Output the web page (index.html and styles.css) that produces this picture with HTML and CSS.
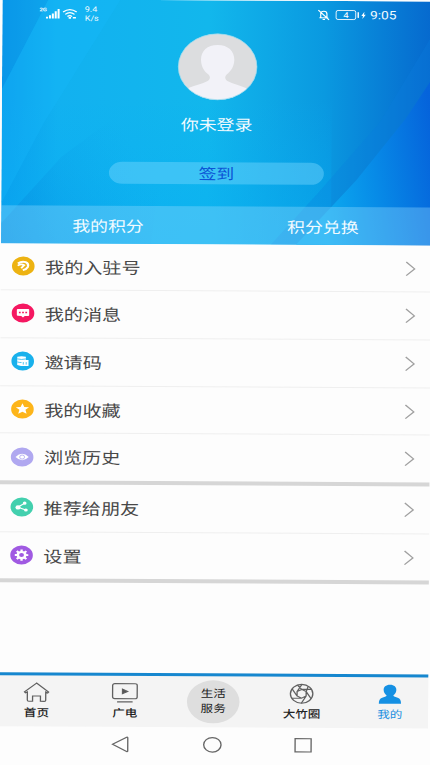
FILE: index.html
```html
<!DOCTYPE html>
<html lang="zh-CN">
<head>
<meta charset="utf-8">
<title>我的</title>
<link rel="stylesheet" href="styles.css">
</head>
<body>
<div class="screen">
  <header class="hero">
    <svg class="hero-bg" viewBox="0 0 430 245" preserveAspectRatio="none">
      <defs>
        <linearGradient id="sky" x1="0" y1="0" x2="1" y2="0">
          <stop offset="0" stop-color="#0b9ceb"/>
          <stop offset="0.13" stop-color="#12b1f0"/>
          <stop offset="0.48" stop-color="#12b7ec"/>
          <stop offset="0.75" stop-color="#0a99e0"/>
          <stop offset="1" stop-color="#0669ce"/>
        </linearGradient>
        <linearGradient id="beam" gradientUnits="userSpaceOnUse" x1="320" y1="200" x2="440" y2="180">
          <stop offset="0" stop-color="#0caef2"/>
          <stop offset="0.45" stop-color="#078de9"/>
          <stop offset="1" stop-color="#0562dc"/>
        </linearGradient>
        <linearGradient id="fade" gradientUnits="userSpaceOnUse" x1="0" y1="245" x2="140" y2="160">
          <stop offset="0" stop-color="#0480d8" stop-opacity="0.45"/>
          <stop offset="1" stop-color="#0ba4ea" stop-opacity="0"/>
        </linearGradient>
        <linearGradient id="low" x1="0" y1="0" x2="0" y2="1">
          <stop offset="0.4" stop-color="#05aef5" stop-opacity="0"/>
          <stop offset="1" stop-color="#05aef5" stop-opacity="0.5"/>
        </linearGradient>
      </defs>
      <rect width="430" height="245" fill="url(#sky)"/>
      <rect width="330" height="245" fill="url(#low)"/>
      <path d="M0 0H46L0 90Z" fill="#0784e0" opacity="0.2"/>
      <path d="M46 0H118L42 124L0 205V90Z" fill="#18b8fb" opacity="0.3"/>
      <path d="M0 225L60 158L170 75L150 245H0Z" fill="url(#fade)"/>
      <path d="M430 34L378 122L315 195L270 245H430Z" fill="#0a7fdf" opacity="0.28"/>
      <path d="M430 78L404 118L355 180L295 245H430Z" fill="url(#beam)" opacity="0.9"/>
    </svg>
    <div class="status">
      <svg class="signal" viewBox="0 0 32 12">
        <text x="0" y="3.9" class="net">2G</text>
        <path d="M5.5 9.2h1.7V11H5.5zM8 7.8h1.7V11H8zM10.4 6h1.7v5h-1.700zM12.8 3.8h1.7V11h-1.700zM15.2 1.400h1.700V11h-1.700z" fill="#fff"/>
        <path d="M19.8 4.400Q25.500-.4 31.200 4.400M21.600 6.800Q25.500 3.400 29.400 6.800M23.500 9Q25.500 7.200 27.300 9" fill="none" stroke="#fff" stroke-width="1.200"/>
        <path d="M24.500 9.500h2v1.600h-2zM28 9.500h2.600v1.400H28z" fill="#fff"/>
      </svg>
      <div class="speed">9.4<br>K/s</div>
      <svg class="battery" viewBox="0 0 40 12">
        <g fill="none" stroke="#fff" stroke-width="1">
          <path d="M.5 9h7.400M1.600 8.800V5.200Q1.600 2.400 4.200 2.400T6.800 5.200V8.800M3.200 10.600h2M-.4 1.300l9 9.600"/>
          <rect x="14.500" y="1.500" width="16.400" height="9" rx="1.600" stroke-width=".8"/>
        </g>
        <path d="M32.400 3.200h1.200v5.600h-1.200zM38.200 2.600L35.600 6.800H37L36.500 10l2.800-4.400h-1.500z" fill="#fff"/>
        <text x="20.500" y="8.900" class="level">4</text>
      </svg>
      <span class="clock">9:05</span>
    </div>
    <svg class="avatar" viewBox="0 0 66 66">
      <defs><clipPath id="face"><circle cx="33" cy="33" r="32.500"/></clipPath></defs>
      <circle cx="33" cy="33" r="32.500" fill="#dcdddf"/>
      <g clip-path="url(#face)" fill="#f2f2f8">
        <path d="M33 11.500C24 11.500 18.800 18 19.300 27C19.600 33 22 37.500 25.500 40.500C27.500 43 27 45.500 24 47.500C20 50 14 51.500 9 54V66H57V54C52 51.500 46 50 42 47.500C39 45.500 38.500 43 40.500 40.500C44 37.500 46.400 33 46.700 27C47.200 18 42 11.500 33 11.500Z"/>
      </g>
      <circle cx="33" cy="33" r="32.400" fill="none" stroke="#9edcf0" stroke-width=".7"/>
    </svg>
    <div class="name">你未登录</div>
    <div class="checkin">签到</div>
    <div class="points"><span>我的积分</span><span>积分兑换</span></div>
  </header>

  <main class="menu">
    <section class="group first">
      <div class="row">
        <svg class="ico" viewBox="0 0 20 20"><circle cx="10" cy="10" r="9.700" fill="#edb312"/><path d="M5.400 7.500Q8.500 4.700 12 6Q15 7.600 13.800 11Q12.800 13.300 9.600 14.200" fill="none" stroke="#fff" stroke-width="2"/><path d="M5.200 9.600Q8.200 7.400 10.800 9L8.200 12.200" fill="none" stroke="#fff" stroke-width="1.700"/></svg>
        <span>我的入驻号</span><svg class="chev" viewBox="0 0 8 15"><path d="M.5.700L7.500 7.500L.5 14.300"/></svg>
      </div>
      <div class="row">
        <svg class="ico" viewBox="0 0 20 20"><circle cx="10" cy="10" r="9.700" fill="#f51861"/><path d="M5.500 5.800h9q.8 0 .8.800v5.500q0 .8-.8.800H11.500L10 14.600L8.500 12.900h-3q-.8 0-.8-.8V6.600q0-.8.8-.8z" fill="#fff"/><path d="M6.500 8.700h1.500v1.400H6.500zM9.250 8.700h1.500v1.400h-1.500zM12 8.700h1.500v1.400H12z" fill="#f51861"/></svg>
        <span>我的消息</span><svg class="chev" viewBox="0 0 8 15"><path d="M.5.700L7.500 7.500L.5 14.300"/></svg>
      </div>
      <div class="row">
        <svg class="ico" viewBox="0 0 20 20"><circle cx="10" cy="10" r="9.700" fill="#19b1ec"/><path d="M5.300 5.600Q9 4.300 12.700 5.600V9H15v6H8.500L5.300 14z" fill="#fff"/><path d="M5.300 7.800Q9 8.900 12.700 7.800M5.300 10.900Q7 11.600 9 11.500M10.500 11v2.600M13 11v2.600" fill="none" stroke="#19b1ec" stroke-width=".7"/></svg>
        <span>邀请码</span><svg class="chev" viewBox="0 0 8 15"><path d="M.5.700L7.500 7.500L.5 14.300"/></svg>
      </div>
      <div class="row">
        <svg class="ico" viewBox="0 0 20 20"><circle cx="10" cy="10" r="9.700" fill="#fdb51a"/><path d="M10 4l1.600 3.800 4.100.3-3.100 2.700 1 4L10 12.700l-3.600 2.100 1-4-3.100-2.700 4.100-.3z" fill="#fff"/></svg>
        <span>我的收藏</span><svg class="chev" viewBox="0 0 8 15"><path d="M.5.700L7.500 7.500L.5 14.300"/></svg>
      </div>
      <div class="row">
        <svg class="ico" viewBox="0 0 20 20"><circle cx="10" cy="10" r="9.700" fill="#b0a8f0"/><path d="M4.300 10Q10 3.400 15.700 10Q10 16.600 4.300 10z" fill="#fff"/><circle cx="10" cy="10" r="2.100" fill="none" stroke="#b0a8f0" stroke-width=".8"/></svg>
        <span>浏览历史</span><svg class="chev" viewBox="0 0 8 15"><path d="M.5.700L7.500 7.500L.5 14.300"/></svg>
      </div>
    </section>
    <section class="group second">
      <div class="row">
        <svg class="ico" viewBox="0 0 20 20"><circle cx="10" cy="10" r="9.700" fill="#43d0ae"/><path d="M12.500 6L6.500 10.200L13.500 13" fill="none" stroke="#fff" stroke-width="1.100"/><g fill="#fff"><circle cx="12.400" cy="6" r="1.600"/><circle cx="6.700" cy="10.400" r="2.200"/><circle cx="13.500" cy="13" r="1.600"/></g></svg>
        <span>推荐给朋友</span><svg class="chev" viewBox="0 0 8 15"><path d="M.5.700L7.500 7.500L.5 14.300"/></svg>
      </div>
      <div class="row">
        <svg class="ico" viewBox="0 0 20 20"><circle cx="10" cy="10" r="9.700" fill="#a05ae2"/><circle cx="10" cy="10" r="3.200" fill="none" stroke="#fff" stroke-width="2.200"/><path d="M10 4.200v2.300M10 13.500v2.300M4.200 10h2.300M13.500 10h2.300M5.900 5.900l1.600 1.600M12.500 12.500l1.600 1.600M14.100 5.900l-1.600 1.600M7.500 12.500l-1.600 1.600" stroke="#fff" stroke-width="2"/></svg>
        <span>设置</span><svg class="chev" viewBox="0 0 8 15"><path d="M.5.700L7.500 7.500L.5 14.300"/></svg>
      </div>
    </section>
  </main>

  <nav class="tabs">
    <div class="tab">
      <svg viewBox="0 0 22 20"><path d="M11 .7L.9 9.500L1.700 10.500L3.300 9.600V17.700Q3.300 18.900 4.500 18.900H7.700V13.600H14.300V18.900H17.500Q18.700 18.900 18.700 17.700V9.600L20.300 10.500L21.100 9.500Z"/></svg>
      <span>首页</span>
    </div>
    <div class="tab">
      <svg viewBox="0 0 22 20"><rect x=".7" y=".8" width="20.600" height="15" rx="1.800"/><path d="M4.500 19h13"/><path d="M9 6.200V10.800L13.300 8.500Z" class="solid"/></svg>
      <span>广电</span>
    </div>
    <div class="tab"><div class="service">生活<br>服务</div></div>
    <div class="tab low">
      <svg viewBox="0 0 22 20"><g transform="translate(11 10)"><circle r="9.400"/><path d="M0-4.400L8.200-4.500M3.800-2.200L8 4.900M3.800 2.200L-.2 9.400M0 4.400L-8.200 4.500M-3.800 2.200L-8-4.900M-3.800-2.200L.2-9.400M0-4.400L-3.800-2.200V2.200L0 4.400L3.800 2.200V-2.200ZM0-4.400L-3.500-8.600M3.800-2.200L5.500-7.500"/></g></svg>
      <span>大竹圈</span>
    </div>
    <div class="tab low active">
      <svg viewBox="0 0 22 20"><path d="M11 .6C7.500.6 5.500 3 5.700 6C5.800 8.500 7 10 8.200 11C8 12.500 6 12.800 4.500 13.500C2.500 14.400 1.700 16 1.700 19.500H20.300C20.300 16 19.500 14.400 17.500 13.500C16 12.800 14 12.500 13.800 11C15 10 16.200 8.500 16.300 6C16.500 3 14.500.6 11 .6Z"/></svg>
      <span>我的</span>
    </div>
  </nav>
  <div class="system">
    <svg viewBox="0 0 18 18"><path d="M2 9L14.500 1.500Q15.500 1 15.500 2V16Q15.500 17 14.500 16.500Z"/></svg>
    <svg viewBox="0 0 18 18"><circle cx="9" cy="9" r="7.700"/></svg>
    <svg viewBox="0 0 18 18"><rect x="1.900" y="2" width="14.200" height="14"/></svg>
  </div>
</div>
</body>
</html>
```
FILE: styles.css
```css
* { box-sizing: border-box; }
html, body { margin: 0; height: 765px; overflow: hidden; background: #fdfdfd; }
body { font-family: Roboto, "Noto Sans CJK SC", sans-serif; color: #484848; }
svg { display: block; flex: none; overflow: visible; }

/* The screen is laid out 360 wide, then stretched and tilted slightly. */
.screen {
  width: 360px;
  height: 768px;
  transform-origin: 0 0;
  transform: matrix(1.194, 0.0063, -0.006, 1, 2.5, -0.8);
}

.hero {
  position: relative;
  height: 244px;
  display: flex;
  flex-direction: column;
  align-items: center;
  color: #f2fbff;
}
.hero-bg { position: absolute; inset: 0; width: 100%; height: 100%; z-index: -1; overflow: hidden; }
.status { align-self: stretch; height: 33px; display: flex; align-items: flex-start; padding: 6px 30px 0 31px; }
.signal { width: 32px; height: 12px; margin-top: 2px; }
.net { font-size: 5px; font-weight: 700; fill: #fff; }
.speed { font-size: 7.500px; line-height: 9px; margin-left: 6px; margin-top: -1px; }
.battery { width: 40px; height: 12px; margin: 2px 3px 0 auto; }
.level { font-size: 8px; fill: #fff; }
.clock { font-size: 11.500px; line-height: 16px; }
.avatar { width: 67px; height: 67px; }
.name { font-size: 15px; line-height: 20px; margin-top: 14.500px; }
.checkin {
  width: 180px;
  height: 22px;
  margin-top: 27px;
  border-radius: 11px;
  background: rgba(125, 218, 255, 0.42);
  color: #0c55d6;
  font-size: 15px;
  line-height: 24px;
  text-align: center;
}
.points {
  align-self: stretch;
  height: 38px;
  margin-top: auto;
  display: flex;
  background: rgba(150, 220, 255, 0.36);
  font-size: 15px;
  line-height: 42px;
  text-align: center;
}
.points span { flex: 1; margin-left: -1px; }

.menu { height: 428.500px; }
.group { display: flex; flex-direction: column; border-bottom: 4.500px solid #d6d6d6; }
.first { height: 241.300px; }
.second { height: 98px; }
.row {
  flex: 1;
  display: flex;
  align-items: center;
  padding: 0 13px 1px 9px;
  border-bottom: 1.500px solid #efefef;
  font-size: 16px;
}
.first .row:first-child { padding-bottom: 0; }
.row:last-child { border-bottom: 0; }
.row span { margin-left: 8.500px; }
.ico { width: 19.500px; height: 19.500px; }
.chev { width: 8px; height: 15px; margin: 1px 0 0 auto; fill: none; stroke: #a0a0a0; stroke-width: 1.200; }

.tabs {
  display: grid;
  grid-template-columns: repeat(5, 74px);
  justify-content: center;
  height: 54.500px;
  border-top: 3px solid #1687cf;
  background: #f4f4f4;
}
.tab {
  display: flex;
  flex-direction: column;
  align-items: center;
  padding-top: 7px;
  font-size: 10.500px;
  font-weight: 500;
  line-height: 14px;
  color: #222;
}
.tab svg { width: 22px; height: 20px; fill: none; stroke: #606060; stroke-width: 1.100; }
.tab .solid { fill: #555; }
.tab span { margin-top: 4px; }
.tab.low { padding-top: 7px; }
.tab.active { color: #1c8fdf; font-weight: 400; }
.tab.active svg { fill: #1590e3; stroke: none; }
.service {
  width: 44px;
  height: 43px;
  margin-top: -3px;
  padding-top: 6px;
  border-radius: 50%;
  background: #dedede;
  font-weight: 400;
  line-height: 15px;
  text-align: center;
}
.system { display: grid; grid-template-columns: repeat(3, 76.500px); justify-content: center; justify-items: center; padding-top: 9px; }
.system svg { width: 17px; height: 17px; position: relative; left: -1px; fill: none; stroke: #666; stroke-width: 1.200; }
```
